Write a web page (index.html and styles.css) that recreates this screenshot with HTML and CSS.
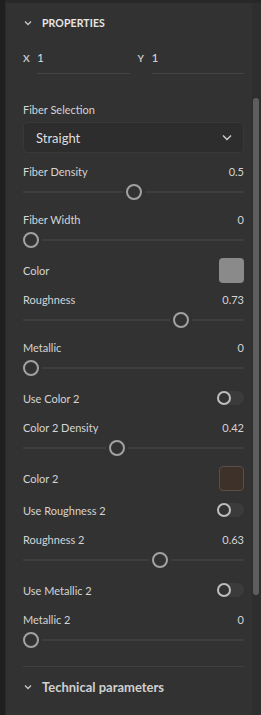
FILE: index.html
```html
<!doctype html>
<html lang="en">
    <head>
        <meta charset="UTF-8" />
        <meta name="viewport" content="width=device-width, initial-scale=1.0" />
        <title>Properties</title>
        <link rel="stylesheet" href="styles.css">
    </head>
    <body>
        <div class="app">
            <div class="edge"></div>
            <div class="panel">
                <div class="content">
                    <div class="section-head">
                        <svg class="chev" width="8" height="6" viewBox="0 0 8 6"><path d="M1 1.5 L4 4.5 L7 1.5" /></svg>
                        <span class="head-title">PROPERTIES</span>
                    </div>

                    <div class="coords">
                        <div class="coord">
                            <span class="axis">X</span>
                            <span class="coord-value">1</span>
                        </div>
                        <div class="coord">
                            <span class="axis">Y</span>
                            <span class="coord-value">1</span>
                        </div>
                    </div>

                    <div class="label select-label">Fiber Selection</div>
                    <div class="select">
                        <span>Straight</span>
                        <svg width="10" height="7" viewBox="0 0 10 7"><path d="M1 1.5 L5 5.5 L9 1.5" /></svg>
                    </div>

                    <div class="field first">
                        <div class="field-head"><span>Fiber Density</span><span>0.5</span></div>
                        <div class="slider"><div class="track"></div><div class="thumb" style="--v: 0.5"></div></div>
                    </div>
                    <div class="field">
                        <div class="field-head"><span>Fiber Width</span><span>0</span></div>
                        <div class="slider"><div class="track"></div><div class="thumb" style="--v: 0"></div></div>
                    </div>
                    <div class="row">
                        <span>Color</span>
                        <div class="swatch grey"></div>
                    </div>
                    <div class="field">
                        <div class="field-head"><span>Roughness</span><span>0.73</span></div>
                        <div class="slider"><div class="track"></div><div class="thumb" style="--v: 0.73"></div></div>
                    </div>
                    <div class="field">
                        <div class="field-head"><span>Metallic</span><span>0</span></div>
                        <div class="slider"><div class="track"></div><div class="thumb" style="--v: 0"></div></div>
                    </div>
                    <div class="row">
                        <span>Use Color 2</span>
                        <div class="toggle"><div class="knob"></div></div>
                    </div>
                    <div class="field">
                        <div class="field-head"><span>Color 2 Density</span><span>0.42</span></div>
                        <div class="slider"><div class="track"></div><div class="thumb" style="--v: 0.42"></div></div>
                    </div>
                    <div class="row">
                        <span>Color 2</span>
                        <div class="swatch brown"></div>
                    </div>
                    <div class="row">
                        <span>Use Roughness 2</span>
                        <div class="toggle"><div class="knob"></div></div>
                    </div>
                    <div class="field">
                        <div class="field-head"><span>Roughness 2</span><span>0.63</span></div>
                        <div class="slider"><div class="track"></div><div class="thumb" style="--v: 0.63"></div></div>
                    </div>
                    <div class="row">
                        <span>Use Metallic 2</span>
                        <div class="toggle"><div class="knob"></div></div>
                    </div>
                    <div class="field">
                        <div class="field-head"><span>Metallic 2</span><span>0</span></div>
                        <div class="slider"><div class="track"></div><div class="thumb" style="--v: 0"></div></div>
                    </div>

                    <div class="divider"></div>

                    <div class="section-head sub">
                        <svg class="chev" width="8" height="6" viewBox="0 0 8 6"><path d="M1 1.5 L4 4.5 L7 1.5" /></svg>
                        <span class="sub-title">Technical parameters</span>
                    </div>
                </div>
                <div class="gutter">
                    <div class="scroll-thumb"></div>
                </div>
            </div>
        </div>
    </body>
</html>
```

FILE: styles.css
```css
body {
    margin: 0;
    padding: 0;
    background-color: #1f1f1f;
    font-family: Lato, "Open Sans", sans-serif;
    color: #d4d4d4;
    font-size: 11px;
}
.app {
    display: flex;
    height: 715px;
}
.edge {
    width: 5px;
    background-color: #1f1f1f;
    border-right: 1px solid #2a2a2a;
}
.panel {
    flex: 1;
    display: flex;
    background-color: #323232;
    border-top: 3px solid #282828;
}
.content {
    flex: 1;
    padding: 0 8px 0 17px;
}
.section-head {
    height: 40px;
    display: flex;
    align-items: center;
}
.chev {
    margin: 0 10px 0 1px;
    fill: none;
    stroke: #c8c8c8;
    stroke-width: 1.3;
}
.head-title {
    font-weight: bold;
    font-size: 10.5px;
    color: #e6e6e6;
    letter-spacing: 0.1px;
}
.coords {
    display: flex;
    gap: 8px;
    margin-top: 6px;
}
.coord {
    flex: 1;
    display: flex;
}
.axis {
    width: 14px;
    line-height: 18px;
    font-weight: bold;
    font-size: 10px;
    color: #c4c4c4;
}
.coord-value {
    flex: 1;
    line-height: 18px;
    padding-bottom: 6px;
    font-size: 12px;
    color: #dcdcdc;
    border-bottom: 1px solid #454545;
}
.label {
    line-height: 20px;
}
.select-label {
    margin-top: 26px;
}
.select {
    margin-top: 2px;
    height: 29px;
    display: flex;
    align-items: center;
    justify-content: space-between;
    padding: 0 11px 0 12px;
    background-color: #2d2d2d;
    border: 1px solid #383838;
    border-radius: 4px;
    font-size: 13px;
    color: #dedede;
}
.select svg {
    fill: none;
    stroke: #cfcfcf;
    stroke-width: 1.4;
}
.field {
    height: 40px;
    margin-top: 8px;
}
.field.first {
    margin-top: 9px;
}
.field-head {
    display: flex;
    justify-content: space-between;
    line-height: 20px;
}
.slider {
    position: relative;
    height: 16px;
    margin-top: 2px;
}
.track {
    position: absolute;
    left: 0;
    right: 0;
    top: 7px;
    height: 2px;
    background-color: #3e3e3e;
}
.thumb {
    position: absolute;
    top: 0;
    left: calc(var(--v) * (100% - 16px));
    width: 12px;
    height: 12px;
    border: 2px solid #a2a2a2;
    border-radius: 50%;
    background-color: #323232;
    box-shadow: 0 0 0 3px #323232;
}
.row {
    height: 24px;
    margin: 8px 0;
    display: flex;
    align-items: center;
    justify-content: space-between;
}
.swatch {
    width: 25px;
    height: 25px;
    border-radius: 4px;
    box-sizing: border-box;
}
.swatch.grey {
    background-color: #8a8a8a;
}
.swatch.brown {
    background-color: #3d3129;
    border: 1px solid #5c4e45;
}
.toggle {
    width: 27px;
    height: 14px;
    border-radius: 7px;
    background-color: #3b3b3b;
    display: flex;
    align-items: center;
}
.knob {
    width: 10px;
    height: 10px;
    border: 2px solid #bdbdbd;
    border-radius: 50%;
    background-color: #323232;
}
.divider {
    margin-top: 16px;
    height: 1px;
    background-color: #414141;
}
.sub-title {
    font-weight: bold;
    font-size: 13px;
    color: #d0d0d0;
}
.gutter {
    width: 9px;
    background-color: #2e2e2e;
}
.scroll-thumb {
    margin: 95px 0 0 1px;
    width: 6px;
    height: 497px;
    border-radius: 3px;
    background-color: #5e5e5e;
}
```
